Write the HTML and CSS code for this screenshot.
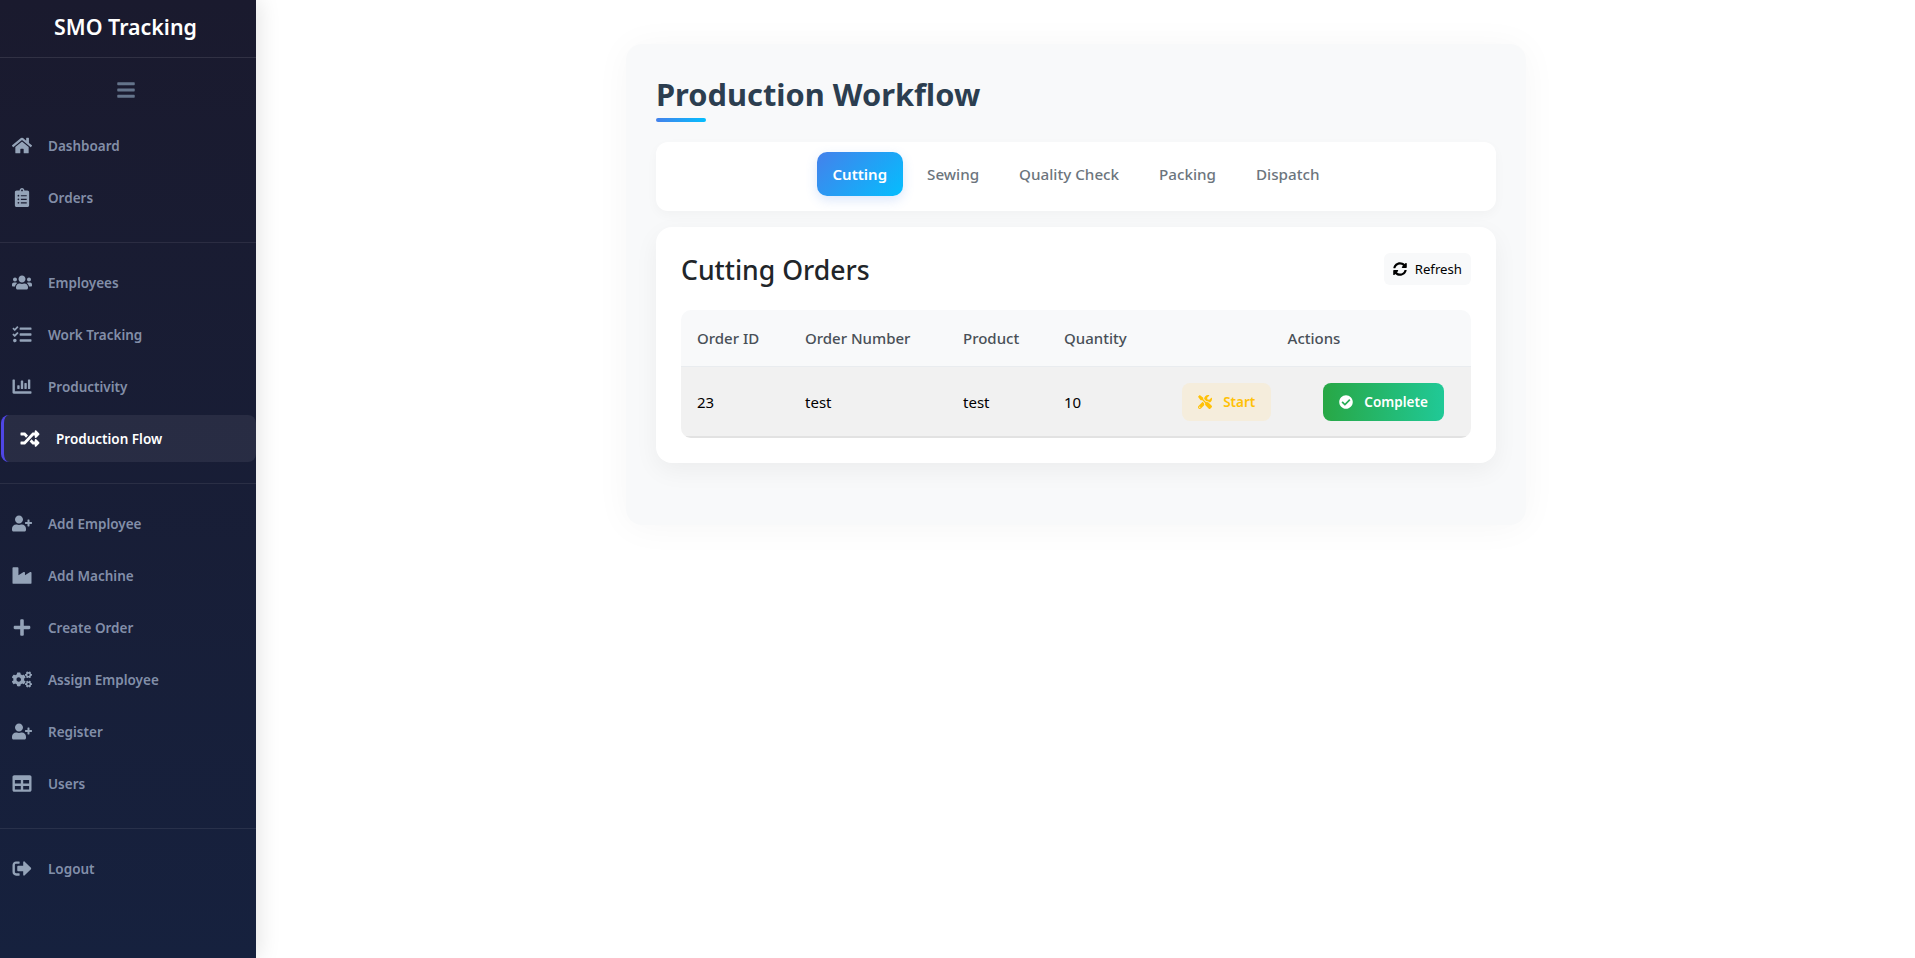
FILE: index.html
```html
<!DOCTYPE html>
<html lang="en">
<head>
  <meta charset="UTF-8">
  <title>Production Workflow</title>
  <link rel="stylesheet" href="styles.css">
</head>
<body>
  <svg class="sprite" xmlns="http://www.w3.org/2000/svg">
    <symbol id="i-bars" viewBox="0 0 448 512"><path d="M16 132h416c8.837 0 16-7.163 16-16V76c0-8.837-7.163-16-16-16H16C7.163 60 0 67.163 0 76v40c0 8.837 7.163 16 16 16zm0 160h416c8.837 0 16-7.163 16-16v-40c0-8.837-7.163-16-16-16H16c-8.837 0-16 7.163-16 16v40c0 8.837 7.163 16 16 16zm0 160h416c8.837 0 16-7.163 16-16v-40c0-8.837-7.163-16-16-16H16c-8.837 0-16 7.163-16 16v40c0 8.837 7.163 16 16 16z"/></symbol>
    <symbol id="i-home" viewBox="0 0 576 512"><path d="M280.37 148.26L96 300.11V464a16 16 0 0 0 16 16l112.06-.29a16 16 0 0 0 15.92-16V368a16 16 0 0 1 16-16h64a16 16 0 0 1 16 16v95.64a16 16 0 0 0 16 16.05L464 480a16 16 0 0 0 16-16V300L295.67 148.26a12.19 12.19 0 0 0-15.3 0zM571.6 251.47L488 182.56V44.05a12 12 0 0 0-12-12h-56a12 12 0 0 0-12 12v72.61L318.47 43a48 48 0 0 0-61 0L4.34 251.47a12 12 0 0 0-1.6 16.9l25.5 31A12 12 0 0 0 45.15 301l235.22-193.74a12.19 12.19 0 0 1 15.3 0L530.9 301a12 12 0 0 0 16.9-1.6l25.5-31a12 12 0 0 0-1.7-16.93z"/></symbol>
    <symbol id="i-clipboard" viewBox="0 0 384 512"><path d="M336 64h-80c0-35.3-28.7-64-64-64s-64 28.7-64 64H48C21.5 64 0 85.5 0 112v352c0 26.5 21.5 48 48 48h288c26.5 0 48-21.500 48-48V112c0-26.500-21.500-48-48-48zM96 424c-13.300 0-24-10.700-24-24s10.700-24 24-24 24 10.700 24 24-10.700 24-24 24zm0-96c-13.300 0-24-10.700-24-24s10.700-24 24-24 24 10.700 24 24-10.700 24-24 24zm0-96c-13.300 0-24-10.700-24-24s10.700-24 24-24 24 10.700 24 24-10.700 24-24 24zm96-192c13.300 0 24 10.700 24 24s-10.700 24-24 24-24-10.700-24-24 10.700-24 24-24zm128 368c0 4.400-3.600 8-8 8H168c-4.400 0-8-3.600-8-8v-16c0-4.400 3.600-8 8-8h144c4.400 0 8 3.600 8 8v16zm0-96c0 4.400-3.600 8-8 8H168c-4.400 0-8-3.600-8-8v-16c0-4.400 3.600-8 8-8h144c4.400 0 8 3.600 8 8v16zm0-96c0 4.400-3.600 8-8 8H168c-4.400 0-8-3.600-8-8v-16c0-4.400 3.600-8 8-8h144c4.400 0 8 3.600 8 8v16z"/></symbol>
    <symbol id="i-users" viewBox="0 0 640 512"><path d="M96 224c35.300 0 64-28.700 64-64s-28.700-64-64-64-64 28.700-64 64 28.700 64 64 64zm448 0c35.300 0 64-28.700 64-64s-28.700-64-64-64-64 28.700-64 64 28.700 64 64 64zm32 32h-64c-17.600 0-33.500 7.100-45.100 18.600 40.300 22.100 68.900 62 75.100 109.400h66c17.700 0 32-14.300 32-32v-32c0-35.300-28.700-64-64-64zm-256 0c61.900 0 112-50.100 112-112S381.900 32 320 32 208 82.100 208 144s50.100 112 112 112zm76.800 32h-8.300c-20.800 10-43.900 16-68.500 16s-47.600-6-68.500-16h-8.300C179.600 288 128 339.600 128 403.200V432c0 26.500 21.500 48 48 48h288c26.500 0 48-21.500 48-48v-28.800c0-63.600-51.600-115.200-115.200-115.200zm-223.700-13.400C161.500 263.100 145.600 256 128 256H64c-35.300 0-64 28.700-64 64v32c0 17.700 14.300 32 32 32h65.900c6.300-47.400 34.900-87.300 75.200-109.400z"/></symbol>
    <symbol id="i-tasks" viewBox="0 0 512 512"><path d="M139.610 35.500a12 12 0 0 0-17 0L58.930 98.810l-22.700-22.120a12 12 0 0 0-17 0L3.530 92.410a12 12 0 0 0 0 17l47.590 47.400a12.780 12.780 0 0 0 17.610 0l15.590-15.620L156.520 69a12.090 12.090 0 0 0 .09-17zm0 159.190a12 12 0 0 0-17 0l-63.680 63.720-22.700-22.100a12 12 0 0 0-17 0L3.530 252a12 12 0 0 0 0 17L51 316.500a12.770 12.770 0 0 0 17.600 0l15.700-15.690 72.200-72.220a12 12 0 0 0 .09-16.900zM64 368c-26.490 0-48.590 21.500-48.590 48S37.530 464 64 464a48 48 0 0 0 0-96zm432 16H208a16 16 0 0 0-16 16v32a16 16 0 0 0 16 16h288a16 16 0 0 0 16-16v-32a16 16 0 0 0-16-16zm0-320H208a16 16 0 0 0-16 16v32a16 16 0 0 0 16 16h288a16 16 0 0 0 16-16V80a16 16 0 0 0-16-16zm0 160H208a16 16 0 0 0-16 16v32a16 16 0 0 0 16 16h288a16 16 0 0 0 16-16v-32a16 16 0 0 0-16-16z"/></symbol>
    <symbol id="i-chart" viewBox="0 0 512 512"><path d="M332.800 320h38.400c6.400 0 12.800-6.400 12.800-12.800V172.800c0-6.400-6.400-12.800-12.800-12.800h-38.400c-6.400 0-12.800 6.400-12.800 12.800v134.400c0 6.400 6.400 12.800 12.800 12.800zm96 0h38.400c6.400 0 12.800-6.400 12.800-12.800V76.800c0-6.400-6.400-12.800-12.800-12.800h-38.400c-6.400 0-12.800 6.400-12.800 12.800v230.400c0 6.400 6.400 12.800 12.800 12.800zm-288 0h38.400c6.400 0 12.800-6.400 12.800-12.800v-70.400c0-6.400-6.400-12.800-12.800-12.800h-38.400c-6.400 0-12.800 6.400-12.800 12.800v70.400c0 6.400 6.400 12.800 12.800 12.800zm96 0h38.400c6.400 0 12.800-6.400 12.800-12.800V108.800c0-6.400-6.400-12.800-12.800-12.800h-38.400c-6.400 0-12.800 6.400-12.800 12.800v198.400c0 6.400 6.400 12.800 12.800 12.800zM496 384H64V80c0-8.840-7.160-16-16-16H16C7.160 64 0 71.160 0 80v336c0 17.670 14.330 32 32 32h464c8.840 0 16-7.160 16-16v-32c0-8.840-7.160-16-16-16z"/></symbol>
    <symbol id="i-random" viewBox="0 0 512 512"><path d="M504.971 359.029c9.373 9.373 9.373 24.569 0 33.941l-80 79.984c-15.010 15.010-40.971 4.490-40.971-16.971V416h-58.785a12.004 12.004 0 0 1-8.773-3.812l-70.556-75.596 53.333-57.143L352 336h32v-39.981c0-21.438 25.943-31.998 40.971-16.971l80 79.981zM12 176h84l52.781 56.551 53.333-57.143-70.556-75.596A11.999 11.999 0 0 0 122.785 96H12c-6.627 0-12 5.373-12 12v56c0 6.627 5.373 12 12 12zm372 0v39.984c0 21.460 25.961 31.980 40.971 16.971l80-79.984c9.373-9.373 9.373-24.569 0-33.941l-80-79.981C409.943 24.021 384 34.582 384 56.019V96h-58.785a12.004 12.004 0 0 0-8.773 3.812L96 336H12c-6.627 0-12 5.373-12 12v56c0 6.627 5.373 12 12 12h110.785c3.326 0 6.503-1.381 8.773-3.812L352 176h32z"/></symbol>
    <symbol id="i-user-plus" viewBox="0 0 640 512"><path d="M624 208h-64v-64c0-8.800-7.200-16-16-16h-32c-8.800 0-16 7.200-16 16v64h-64c-8.800 0-16 7.200-16 16v32c0 8.800 7.200 16 16 16h64v64c0 8.800 7.200 16 16 16h32c8.800 0 16-7.200 16-16v-64h64c8.800 0 16-7.200 16-16v-32c0-8.800-7.200-16-16-16zm-400 48c70.700 0 128-57.300 128-128S294.700 0 224 0 96 57.300 96 128s57.300 128 128 128zm89.600 32h-16.700c-22.200 10.200-46.900 16-72.900 16s-50.600-5.800-72.900-16h-16.700C60.200 288 0 348.200 0 422.400V464c0 26.500 21.500 48 48 48h352c26.500 0 48-21.500 48-48v-41.600c0-74.200-60.200-134.400-134.400-134.400z"/></symbol>
    <symbol id="i-industry" viewBox="0 0 512 512"><path d="M475.115 163.781L336 252.309v-68.280c0-18.916-20.931-30.399-36.885-20.248L160 252.309V56c0-13.255-10.745-24-24-24H24C10.745 32 0 42.745 0 56v400c0 13.255 10.745 24 24 24h464c13.255 0 24-10.745 24-24V184.029c0-18.917-20.931-30.399-36.885-20.248z"/></symbol>
    <symbol id="i-plus" viewBox="0 0 448 512"><path d="M416 208H272V64c0-17.670-14.330-32-32-32h-32c-17.670 0-32 14.330-32 32v144H32c-17.670 0-32 14.330-32 32v32c0 17.670 14.330 32 32 32h144v144c0 17.670 14.330 32 32 32h32c17.670 0 32-14.330 32-32V304h144c17.670 0 32-14.330 32-32v-32c0-17.670-14.330-32-32-32z"/></symbol>
    <symbol id="i-cogs" viewBox="0 0 640 512"><path d="M512.100 191l-8.200 14.300c-3 5.300-9.400 7.500-15.100 5.400-11.800-4.400-22.600-10.700-32.100-18.600-4.600-3.800-5.800-10.500-2.800-15.700l8.200-14.300c-6.900-8-12.300-17.300-15.900-27.400h-16.500c-6 0-11.200-4.300-12.200-10.300-2-12-2.100-24.600 0-37.100 1-6 6.200-10.400 12.200-10.400h16.500c3.600-10.100 9-19.400 15.900-27.400l-8.200-14.300c-3-5.200-1.900-11.900 2.800-15.700 9.500-7.900 20.400-14.200 32.100-18.600 5.700-2.100 12.100.1 15.100 5.400l8.200 14.300c10.500-1.900 21.200-1.900 31.700 0L552 6.300c3-5.300 9.400-7.500 15.100-5.400 11.800 4.400 22.600 10.700 32.100 18.600 4.600 3.800 5.800 10.500 2.800 15.700l-8.200 14.300c6.900 8 12.300 17.300 15.900 27.400h16.500c6 0 11.200 4.300 12.200 10.300 2 12 2.100 24.600 0 37.100-1 6-6.200 10.400-12.200 10.400h-16.500c-3.600 10.100-9 19.400-15.900 27.400l8.200 14.300c3 5.200 1.900 11.900-2.800 15.700-9.500 7.900-20.400 14.200-32.100 18.600-5.700 2.100-12.100-.1-15.100-5.400l-8.200-14.300c-10.400 1.900-21.200 1.900-31.700 0zm-10.500-58.800c38.500 29.600 82.400-14.300 52.800-52.800-38.500-29.700-82.400 14.300-52.800 52.800zM386.300 286.100l33.700 16.800c10.100 5.800 14.500 18.100 10.500 29.100-8.900 24.200-26.400 46.400-42.600 65.800-7.400 8.900-20.200 11.100-30.300 5.300l-29.100-16.800c-16 13.700-34.600 24.600-54.900 31.700v33.600c0 11.600-8.300 21.600-19.700 23.600-24.600 4.200-50.400 4.400-75.900 0-11.500-2-20-11.900-20-23.600V418c-20.300-7.200-38.900-18-54.900-31.700L74 403c-10 5.800-22.900 3.600-30.300-5.300-16.200-19.400-33.300-41.600-42.200-65.700-4-10.900.4-23.200 10.500-29.100l33.300-16.800c-3.900-20.900-3.900-42.400 0-63.400L12 205.800c-10.100-5.800-14.600-18.100-10.500-29 8.900-24.200 26-46.400 42.200-65.800 7.400-8.900 20.200-11.100 30.300-5.300l29.100 16.800c16-13.700 34.600-24.600 54.900-31.700V57.100c0-11.500 8.200-21.500 19.600-23.500 24.600-4.200 50.500-4.400 76-.1 11.500 2 20 11.900 20 23.600v33.600c20.300 7.200 38.900 18 54.900 31.700l29.100-16.800c10-5.800 22.900-3.600 30.300 5.300 16.200 19.400 33.200 41.600 42.100 65.800 4 10.900.1 23.200-10 29.100l-33.700 16.800c3.900 21 3.900 42.500 0 63.500zm-117.600 21.100c59.200-77-28.700-164.900-105.700-105.700-59.200 77 28.700 164.900 105.700 105.700zm243.400 182.700l-8.200 14.300c-3 5.300-9.400 7.500-15.100 5.400-11.800-4.400-22.600-10.700-32.100-18.600-4.600-3.800-5.800-10.500-2.800-15.700l8.200-14.300c-6.900-8-12.300-17.300-15.900-27.400h-16.500c-6 0-11.200-4.300-12.200-10.300-2-12-2.100-24.600 0-37.100 1-6 6.200-10.400 12.200-10.400h16.500c3.600-10.100 9-19.400 15.900-27.400l-8.200-14.300c-3-5.200-1.900-11.900 2.800-15.700 9.500-7.900 20.400-14.200 32.100-18.600 5.700-2.100 12.100.1 15.100 5.400l8.200 14.300c10.500-1.900 21.200-1.900 31.700 0l8.200-14.300c3-5.300 9.400-7.500 15.100-5.400 11.800 4.400 22.600 10.700 32.100 18.600 4.600 3.800 5.800 10.500 2.800 15.700l-8.200 14.300c6.900 8 12.300 17.300 15.900 27.400h16.500c6 0 11.200 4.300 12.200 10.300 2 12 2.100 24.600 0 37.100-1 6-6.200 10.400-12.200 10.400h-16.500c-3.600 10.100-9 19.400-15.900 27.400l8.200 14.300c3 5.200 1.900 11.900-2.800 15.700-9.500 7.900-20.400 14.200-32.100 18.600-5.700 2.100-12.100-.1-15.100-5.400l-8.200-14.300c-10.400 1.900-21.200 1.900-31.700 0zM501.600 431c38.500 29.600 82.400-14.300 52.800-52.800-38.500-29.600-82.400 14.300-52.800 52.800z"/></symbol>
    <symbol id="i-table" viewBox="0 0 512 512"><path d="M464 32H48C21.490 32 0 53.490 0 80v352c0 26.510 21.490 48 48 48h416c26.510 0 48-21.490 48-48V80c0-26.510-21.490-48-48-48zM224 416H64v-96h160v96zm0-160H64v-96h160v96zm224 160H288v-96h160v96zm0-160H288v-96h160v96z"/></symbol>
    <symbol id="i-logout" viewBox="0 0 512 512"><path d="M497 273L329 441c-15 15-41 4.500-41-17v-96H152c-13.300 0-24-10.700-24-24v-96c0-13.300 10.700-24 24-24h136V88c0-21.400 25.900-32 41-17l168 168c9.300 9.400 9.300 24.600 0 34zM192 436v-40c0-6.600-5.400-12-12-12H96c-17.700 0-32-14.300-32-32V160c0-17.700 14.300-32 32-32h84c6.600 0 12-5.400 12-12V76c0-6.600-5.400-12-12-12H96c-53 0-96 43-96 96v192c0 53 43 96 96 96h84c6.600 0 12-5.400 12-12z"/></symbol>
    <symbol id="i-sync" viewBox="0 0 512 512"><path d="M370.720 133.280C339.458 104.008 298.888 87.962 255.848 88c-77.458.068-144.328 53.178-162.791 126.850-1.344 5.363-6.122 9.150-11.651 9.150H24.103c-7.498 0-13.194-6.807-11.807-14.176C33.933 94.924 134.813 8 256 8c66.448 0 126.791 26.136 171.315 68.685L463.030 40.970C478.149 25.851 504 36.559 504 57.941V192c0 13.255-10.745 24-24 24H345.941c-21.382 0-32.090-25.851-16.971-40.971l41.750-41.749zM32 296h134.059c21.382 0 32.090 25.851 16.971 40.971l-41.750 41.750c31.262 29.273 71.835 45.319 114.876 45.280 77.418-.070 144.315-53.144 162.787-126.849 1.344-5.363 6.122-9.150 11.651-9.150h57.304c7.498 0 13.194 6.807 11.807 14.176C478.067 417.076 377.187 504 256 504c-66.448 0-126.791-26.136-171.315-68.685L48.970 471.030C33.851 486.149 8 475.441 8 454.059V320c0-13.255 10.745-24 24-24z"/></symbol>
    <symbol id="i-tools" viewBox="0 0 512 512"><path d="M501.100 395.700L384 278.600c-23.100-23.100-57.600-27.600-85.400-13.900L192 158.100V96L64 0 0 64l96 128h62.100l106.600 106.600c-13.600 27.800-9.200 62.300 13.900 85.400l117.100 117.100c14.600 14.600 38.200 14.600 52.700 0l52.700-52.700c14.500-14.600 14.500-38.200 0-52.700zM331.700 225c28.300 0 54.900 11 74.900 31l19.400 19.400c15.800-6.900 30.800-16.500 43.800-29.500 37.100-37.100 49.700-89.300 37.900-136.700-2.200-9-13.500-12.100-20.100-5.500l-74.400 74.400-67.900-11.300L334 98.900l74.400-74.400c6.600-6.600 3.400-17.900-5.700-20.200-47.400-11.700-99.600.9-136.600 37.900-28.500 28.500-41.900 66.100-41.200 103.600l82.100 82.100c8.100-1.900 16.500-2.900 24.700-2.900zm-103.900 82l-56.700-56.700L18.700 402.800c-25 25-25 65.500 0 90.500s65.500 25 90.500 0l123.600-123.600c-7.600-19.900-9.900-41.600-5-62.700zM64 472c-13.200 0-24-10.800-24-24 0-13.300 10.700-24 24-24s24 10.700 24 24c0 13.200-10.700 24-24 24z"/></symbol>
    <symbol id="i-check" viewBox="0 0 512 512"><path d="M504 256c0 136.967-111.033 248-248 248S8 392.967 8 256 119.033 8 256 8s248 111.033 248 248zM227.314 387.314l184-184c6.248-6.248 6.248-16.379 0-22.627l-22.627-22.627c-6.248-6.249-16.379-6.249-22.628 0L216 308.118l-70.059-70.059c-6.248-6.248-16.379-6.248-22.628 0l-22.627 22.627c-6.248 6.248-6.248 16.379 0 22.627l104 104c6.249 6.249 16.379 6.249 22.628.001z"/></symbol>
  </svg>

  <aside class="sidebar">
    <div class="sidebar-header">SMO Tracking</div>
    <div class="sidebar-toggle"><svg class="toggle-icon"><use href="#i-bars"/></svg></div>
    <nav class="nav">
      <a class="nav-item" href="#"><svg class="nav-icon"><use href="#i-home"/></svg>Dashboard</a>
      <a class="nav-item" href="#"><svg class="nav-icon"><use href="#i-clipboard"/></svg>Orders</a>
      <hr class="nav-divider">
      <a class="nav-item" href="#"><svg class="nav-icon"><use href="#i-users"/></svg>Employees</a>
      <a class="nav-item" href="#"><svg class="nav-icon"><use href="#i-tasks"/></svg>Work Tracking</a>
      <a class="nav-item" href="#"><svg class="nav-icon"><use href="#i-chart"/></svg>Productivity</a>
      <a class="nav-item active" href="#"><svg class="nav-icon"><use href="#i-random"/></svg>Production Flow</a>
      <hr class="nav-divider">
      <a class="nav-item" href="#"><svg class="nav-icon"><use href="#i-user-plus"/></svg>Add Employee</a>
      <a class="nav-item" href="#"><svg class="nav-icon"><use href="#i-industry"/></svg>Add Machine</a>
      <a class="nav-item" href="#"><svg class="nav-icon"><use href="#i-plus"/></svg>Create Order</a>
      <a class="nav-item" href="#"><svg class="nav-icon"><use href="#i-cogs"/></svg>Assign Employee</a>
      <a class="nav-item" href="#"><svg class="nav-icon"><use href="#i-user-plus"/></svg>Register</a>
      <a class="nav-item" href="#"><svg class="nav-icon"><use href="#i-table"/></svg>Users</a>
      <hr class="nav-divider">
      <a class="nav-item" href="#"><svg class="nav-icon"><use href="#i-logout"/></svg>Logout</a>
    </nav>
  </aside>

  <main class="main">
    <div class="workflow">
      <h1 class="page-title">Production Workflow</h1>

      <div class="tabs">
        <a class="tab active" href="#">Cutting</a>
        <a class="tab" href="#">Sewing</a>
        <a class="tab" href="#">Quality Check</a>
        <a class="tab" href="#">Packing</a>
        <a class="tab" href="#">Dispatch</a>
      </div>

      <section class="panel">
        <div class="panel-head">
          <h2 class="panel-title">Cutting Orders</h2>
          <button class="btn-refresh"><svg class="btn-icon"><use href="#i-sync"/></svg>Refresh</button>
        </div>
        <table class="orders">
          <thead>
            <tr>
              <th class="col-id">Order ID</th>
              <th class="col-number">Order Number</th>
              <th class="col-product">Product</th>
              <th class="col-qty">Quantity</th>
              <th class="col-actions">Actions</th>
            </tr>
          </thead>
          <tbody>
            <tr>
              <td>23</td>
              <td>test</td>
              <td>test</td>
              <td>10</td>
              <td>
                <div class="actions">
                  <button class="btn btn-start"><svg class="btn-icon"><use href="#i-tools"/></svg>Start</button>
                  <button class="btn btn-complete"><svg class="btn-icon"><use href="#i-check"/></svg>Complete</button>
                </div>
              </td>
            </tr>
          </tbody>
        </table>
      </section>
    </div>
  </main>
</body>
</html>
```

FILE: styles.css
```css
* {
  box-sizing: border-box;
}
body {
  margin: 0;
  min-height: 958px;
  display: flex;
  background: #fff;
  font-family: "Noto Sans", "Open Sans", Arial, sans-serif;
}
.sprite {
  display: none;
}

/* sidebar */
.sidebar {
  width: 256px;
  flex-shrink: 0;
  height: 958px;
  background: linear-gradient(180deg, #1a1a2e 0%, #16213e 100%);
  box-shadow: 4px 0 20px rgba(0, 0, 0, 0.1);
}
.sidebar-header {
  height: 58px;
  padding: 11px 5px 0 0;
  border-bottom: 1px solid rgba(255, 255, 255, 0.1);
  text-align: center;
  color: #fff;
  font-size: 21.4px;
  font-weight: 600;
  line-height: 32px;
}
.sidebar-toggle {
  height: 64px;
  display: flex;
  justify-content: center;
  padding: 22px 5px 0 0;
}
.toggle-icon {
  width: 18px;
  height: 20px;
  fill: #64748b;
}
.nav-item {
  display: flex;
  align-items: center;
  gap: 16px;
  height: 47px;
  margin-bottom: 5px;
  padding-left: 12px;
  color: rgba(160, 174, 200, 0.8);
  font-size: 13.5px;
  font-weight: 600;
  text-decoration: none;
}
.nav-icon {
  width: 20px;
  height: 19px;
  flex-shrink: 0;
  fill: #94a3b8;
}
.nav-item.active {
  margin-left: 1px;
  padding-left: 16px;
  border-left: 3px solid #4f46e5;
  border-radius: 8px;
  background: rgba(255, 255, 255, 0.07);
  color: #fff;
}
.nav-item.active .nav-icon {
  fill: #fff;
}
.nav-divider {
  margin: 21px 0 16px;
  border: 0;
  border-top: 1px solid rgba(255, 255, 255, 0.08);
}

/* main area */
.main {
  flex: 1;
  display: flex;
  justify-content: center;
  align-items: flex-start;
  padding: 44px 19px 0 0;
}
.workflow {
  width: 900px;
  height: 481px;
  padding: 28px 30px;
  border-radius: 16px;
  background: #f8f9fa;
  box-shadow: 0 2px 36px rgba(0, 0, 0, 0.04);
}
.page-title {
  position: relative;
  margin: 0 0 20px;
  height: 50px;
  color: #2c3e50;
  font-size: 30.8px;
  font-weight: 700;
  line-height: 44px;
}
.page-title::after {
  content: "";
  position: absolute;
  left: 0;
  bottom: 0;
  width: 50px;
  height: 4px;
  border-radius: 2px;
  background: linear-gradient(90deg, #4481eb, #04befe);
}

/* tabs */
.tabs {
  display: flex;
  justify-content: center;
  gap: 8px;
  height: 69px;
  padding: 10px;
  border-radius: 12px;
  background: #fff;
  box-shadow: 0 4px 12px rgba(0, 0, 0, 0.03);
}
.tab {
  height: 44px;
  padding: 0 16px;
  border-radius: 10px;
  color: #6c757d;
  font-size: 15.2px;
  font-weight: 500;
  line-height: 44px;
  text-decoration: none;
}
.tab.active {
  color: #fff;
  font-size: 15px;
  font-weight: 600;
  background: linear-gradient(135deg, #4481eb, #04befe);
  box-shadow: 0 4px 12px rgba(68, 129, 235, 0.2);
}

/* orders panel */
.panel {
  margin-top: 16px;
  height: 236px;
  padding: 25px;
  border-radius: 16px;
  background: #fff;
  box-shadow: 0 8px 24px rgba(0, 0, 0, 0.05);
}
.panel-head {
  display: flex;
  justify-content: space-between;
  align-items: flex-start;
  height: 58px;
}
.panel-title {
  margin: -1px 0 0;
  color: #212529;
  font-size: 26.6px;
  font-weight: 500;
  line-height: 38px;
}
.btn-refresh {
  display: flex;
  align-items: center;
  gap: 8px;
  height: 32px;
  margin-top: 1px;
  padding: 0 9px;
  border: 0;
  border-radius: 6px;
  background: #f8f9fa;
  color: #000;
  font: inherit;
  font-size: 13.2px;
}
.btn-icon {
  width: 14px;
  height: 14px;
  fill: currentColor;
}

/* table */
.orders {
  width: 100%;
  border-collapse: separate;
  border-spacing: 0;
  table-layout: fixed;
  border-radius: 10px;
  overflow: hidden;
  font-size: 15px;
}
.orders th {
  height: 57px;
  padding: 0 16px;
  border-bottom: 1px solid #e9ecef;
  background: #f8f9fa;
  color: #495057;
  font-weight: 500;
  text-align: left;
}
.orders td {
  height: 71px;
  padding: 0 16px;
  border-bottom: 2px solid #e2e2e2;
  background: #f1f1f1;
  color: #000;
}
.col-id {
  width: 108px;
}
.col-number {
  width: 158px;
}
.col-product {
  width: 101px;
}
.col-qty {
  width: 109px;
}
.orders .col-actions {
  text-align: center;
}
.actions {
  display: flex;
  justify-content: center;
  gap: 52px;
  margin-left: -2px;
}
.btn {
  display: flex;
  align-items: center;
  gap: 11px;
  height: 38px;
  padding: 0 16px;
  border: 0;
  border-radius: 8px;
  font: inherit;
  font-size: 13.5px;
  font-weight: 600;
}
.btn-start {
  background: #f5eddc;
  color: #ffc107;
}
.btn-complete {
  background: linear-gradient(90deg, #28a745, #20c997);
  color: #fff;
}
```
